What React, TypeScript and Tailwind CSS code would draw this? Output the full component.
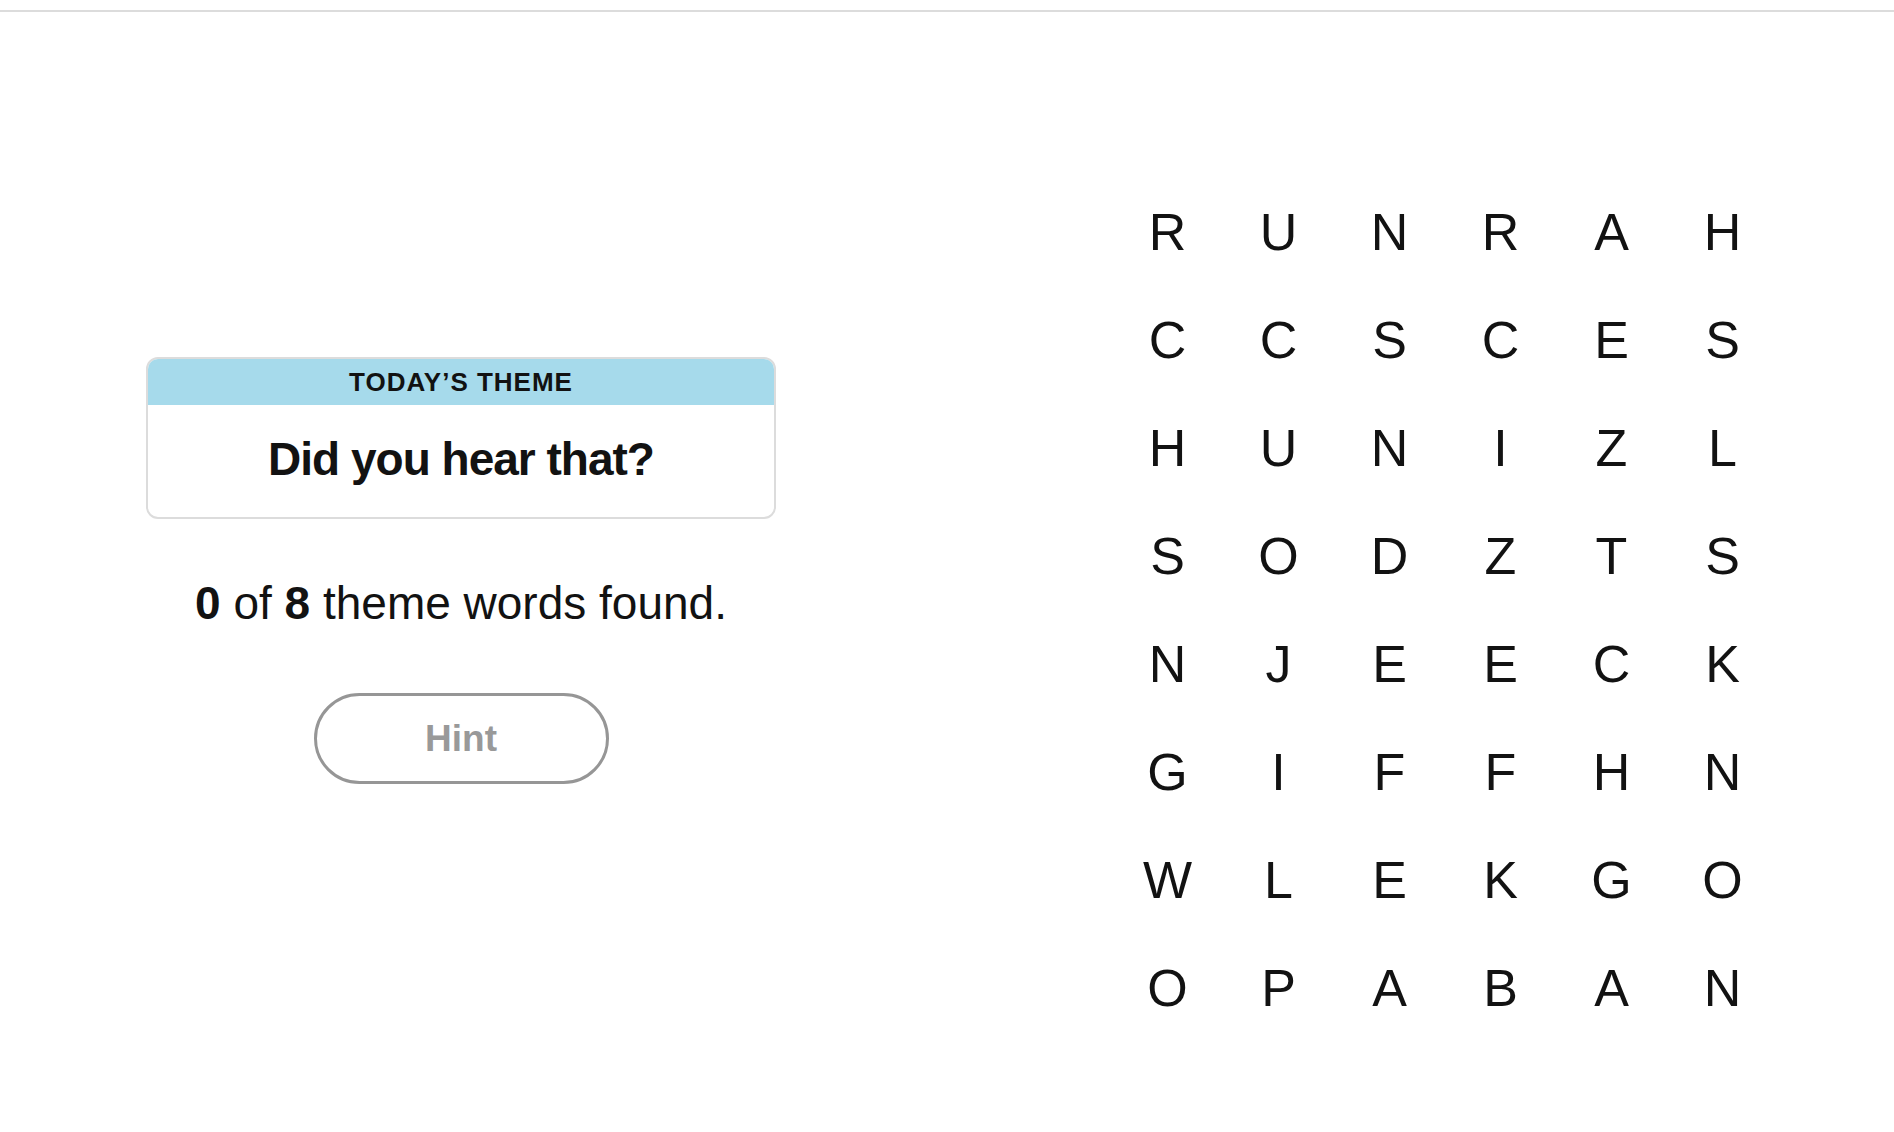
import React from 'react';

const GRID: string[][] = [
    ['R', 'U', 'N', 'R', 'A', 'H'],
    ['C', 'C', 'S', 'C', 'E', 'S'],
    ['H', 'U', 'N', 'I', 'Z', 'L'],
    ['S', 'O', 'D', 'Z', 'T', 'S'],
    ['N', 'J', 'E', 'E', 'C', 'K'],
    ['G', 'I', 'F', 'F', 'H', 'N'],
    ['W', 'L', 'E', 'K', 'G', 'O'],
    ['O', 'P', 'A', 'B', 'A', 'N'],
];

const ThemeCard: React.FC = () => (
    <div className="w-[630px] rounded-[12px] border-2 border-[#dcdcdc] overflow-hidden bg-white">
        <div className="h-[46px] bg-[#a6daeb] flex items-center justify-center">
            <span className="text-[26px] font-bold tracking-[1px] text-[#121212]">TODAY’S THEME</span>
        </div>
        <div className="h-[112px] flex items-center justify-center pb-[4px]">
            <span className="text-[46px] font-bold tracking-[-1px] text-[#121212]">Did you hear that?</span>
        </div>
    </div>
);

export default function App() {
    return (
        <div className="min-h-screen bg-white font-['Liberation_Sans',Arial,sans-serif] text-[#121212]">
            <div className="h-[12px] border-b-2 border-[#dcdcdc]" />

            <main className="flex items-start">
                {/* left side: theme + progress + hint */}
                <section className="ml-[146px] mt-[345px] flex flex-col items-center">
                    <ThemeCard />

                    <p className="mt-[56px] text-[46px] leading-[56px]">
                        <span className="font-bold">0</span> of <span className="font-bold">8</span> theme words found.
                    </p>

                    <button
                        type="button"
                        className="mt-[62px] w-[295px] h-[91px] rounded-full border-[3px] border-[#969696] bg-white text-[37px] font-bold text-[#999999]"
                    >
                        Hint
                    </button>
                </section>

                {/* letter board */}
                <section className="ml-[336px] mt-[166px] grid grid-cols-6">
                    {GRID.flat().map((letter, i) => (
                        <div key={i} className="w-[111px] h-[108px] flex items-center justify-center">
                            <span className="text-[52px] leading-[108px] text-[#121212]">{letter}</span>
                        </div>
                    ))}
                </section>
            </main>
        </div>
    );
}
